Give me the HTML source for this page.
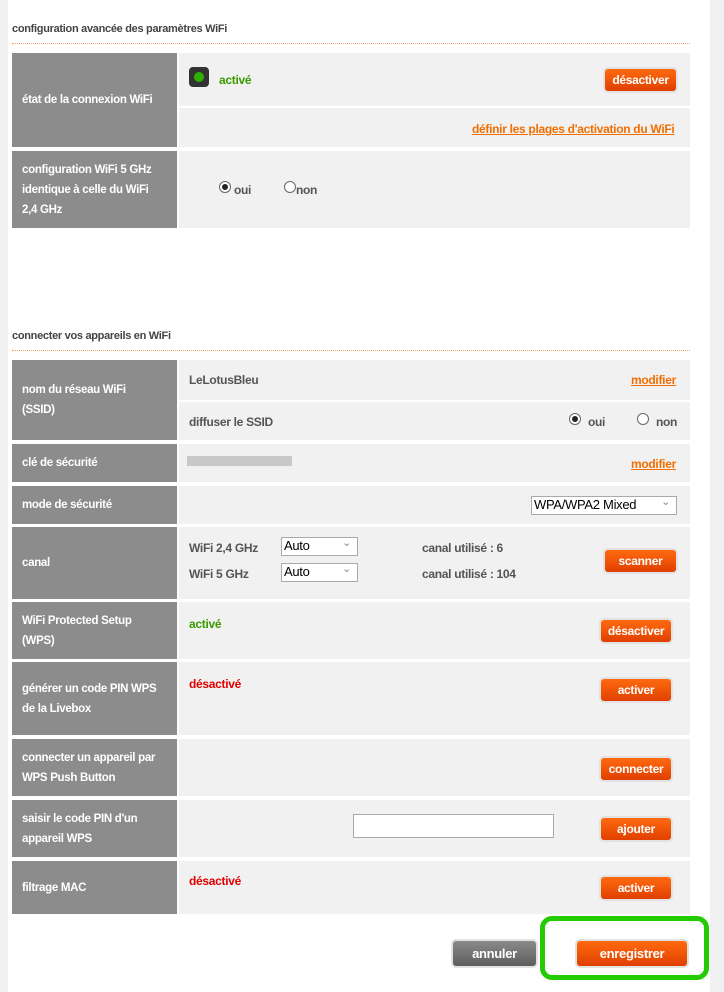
<!DOCTYPE html>
<html><head><meta charset="utf-8"><style>
body{margin:0;width:724px;height:992px;position:relative;background:#fff;font-family:"Liberation Sans",sans-serif;font-size:12px;font-weight:bold;color:#555;overflow:hidden;letter-spacing:-0.3px}
div,span{position:absolute;box-sizing:border-box}
.ls{left:0;top:0;width:8px;height:992px;background:#f0f0f0}
.rs{left:710px;top:0;width:14px;height:992px;background:#f0f0f0}
.t{left:12px;color:#444;font-size:11px}
.dot{left:12px;width:678px;border-top:1px dotted #f7a070}
.lab{left:12px;width:165px;background:#8c8c8c;color:#fff;padding-left:10px;display:flex;align-items:center;line-height:20px;font-size:11.5px;white-space:nowrap}
.c{left:179px;width:511px;background:#f1f1f1}
.btn{background:linear-gradient(#ff6a10,#e04000);color:#fff;border-radius:3px;box-shadow:0 0 0 2px #e2e2e2;text-align:center;line-height:22px;height:22px;font-size:12px}
.lnk{color:#f16e00;text-decoration:underline}
.g{color:#3a9a00}.r{color:#e00000}
.sel{background:#fff;border:1px solid #aaa;font-weight:normal;color:#000;font-size:13px;padding-left:2px;line-height:16px;height:19px}
.sel:after{content:"⌄";position:absolute;right:6px;top:-3px;color:#888;font-size:11px}
.rad{width:12px;height:12px;border:1px solid #666;border-radius:50%;background:#fff}
.rad.on:after{content:"";position:absolute;left:2px;top:2px;width:6px;height:6px;border-radius:50%;background:#222}
</style></head><body>
<div class="ls"></div><div class="rs"></div>
<div class="t" style="top:23px">configuration avancée des paramètres WiFi</div>
<div class="dot" style="top:43px"></div>
<div class="lab" style="top:53px;height:94px">état de la connexion WiFi</div>
<div class="c" style="top:53px;height:53px"></div>
<div class="c" style="top:108px;height:39px"></div>
<div style="left:189px;top:67px;width:20px;height:20px;background:#333;border-radius:4px"><span style="left:5px;top:5px;width:10px;height:10px;border-radius:50%;background:#2eb000"></span></div>
<div class="g" style="left:219px;top:73px">activé</div>
<div class="btn" style="left:605px;top:69px;width:71px">désactiver</div>
<div class="lnk" style="left:472px;top:122px">définir les plages d'activation du WiFi</div>
<div class="lab" style="top:151px;height:77px">configuration WiFi 5 GHz<br>identique à celle du WiFi<br>2,4 GHz</div>
<div class="c" style="top:151px;height:77px"></div>
<div class="rad on" style="left:219px;top:181px"></div><div style="left:234px;top:183px">oui</div>
<div class="rad" style="left:284px;top:181px"></div><div style="left:296px;top:183px">non</div>

<div class="t" style="top:330px">connecter vos appareils en WiFi</div>
<div class="dot" style="top:350px"></div>
<div class="lab" style="top:360px;height:80px">nom du réseau WiFi<br>(SSID)</div>
<div class="c" style="top:360px;height:40px"></div>
<div class="c" style="top:402px;height:38px"></div>
<div style="left:189px;top:373px">LeLotusBleu</div>
<div class="lnk" style="left:631px;top:373px">modifier</div>
<div style="left:189px;top:415px">diffuser le SSID</div>
<div class="rad on" style="left:569px;top:413px"></div><div style="left:588px;top:415px">oui</div>
<div class="rad" style="left:637px;top:413px"></div><div style="left:656px;top:415px">non</div>
<div class="lab" style="top:444px;height:38px">clé de sécurité</div>
<div class="c" style="top:444px;height:38px"></div>
<div style="left:187px;top:456px;width:105px;height:10px;background:#c8c8c8"></div>
<div class="lnk" style="left:631px;top:457px">modifier</div>
<div class="lab" style="top:486px;height:38px">mode de sécurité</div>
<div class="c" style="top:486px;height:38px"></div>
<div class="sel" style="left:531px;top:496px;width:146px">WPA/WPA2 Mixed</div>
<div class="lab" style="top:527px;height:72px">canal</div>
<div class="c" style="top:527px;height:72px"></div>
<div style="left:189px;top:541px">WiFi 2,4 GHz</div>
<div class="sel" style="left:281px;top:537px;width:77px">Auto</div>
<div style="left:422px;top:541px">canal utilisé : 6</div>
<div style="left:189px;top:567px">WiFi 5 GHz</div>
<div class="sel" style="left:281px;top:563px;width:77px">Auto</div>
<div style="left:422px;top:567px">canal utilisé : 104</div>
<div class="btn" style="left:605px;top:550px;width:71px">scanner</div>
<div class="lab" style="top:602px;height:57px">WiFi Protected Setup<br>(WPS)</div>
<div class="c" style="top:602px;height:57px"></div>
<div class="g" style="left:189px;top:617px">activé</div>
<div class="btn" style="left:601px;top:620px;width:70px">désactiver</div>
<div class="lab" style="top:662px;height:73px">générer un code PIN WPS<br>de la Livebox</div>
<div class="c" style="top:662px;height:73px"></div>
<div class="r" style="left:189px;top:677px">désactivé</div>
<div class="btn" style="left:601px;top:679px;width:70px">activer</div>
<div class="lab" style="top:739px;height:57px">connecter un appareil par<br>WPS Push Button</div>
<div class="c" style="top:739px;height:57px"></div>
<div class="btn" style="left:601px;top:758px;width:70px">connecter</div>
<div class="lab" style="top:800px;height:57px">saisir le code PIN d'un<br>appareil WPS</div>
<div class="c" style="top:800px;height:57px"></div>
<div style="left:353px;top:814px;width:201px;height:24px;background:#fff;border:1px solid #aaa"></div>
<div class="btn" style="left:601px;top:818px;width:70px">ajouter</div>
<div class="lab" style="top:861px;height:53px">filtrage MAC</div>
<div class="c" style="top:861px;height:53px"></div>
<div class="r" style="left:189px;top:874px">désactivé</div>
<div class="btn" style="left:601px;top:877px;width:70px">activer</div>

<div class="btn" style="left:453px;top:941px;width:83px;height:25px;line-height:25px;background:linear-gradient(#8a8a8a,#5e5e5e);font-size:13px">annuler</div>
<div class="btn" style="left:577px;top:941px;width:110px;height:25px;line-height:25px;font-size:13px">enregistrer</div>
<div style="left:540px;top:916px;width:169px;height:64px;border:5px solid #22cc00;border-radius:12px"></div>
</body></html>
